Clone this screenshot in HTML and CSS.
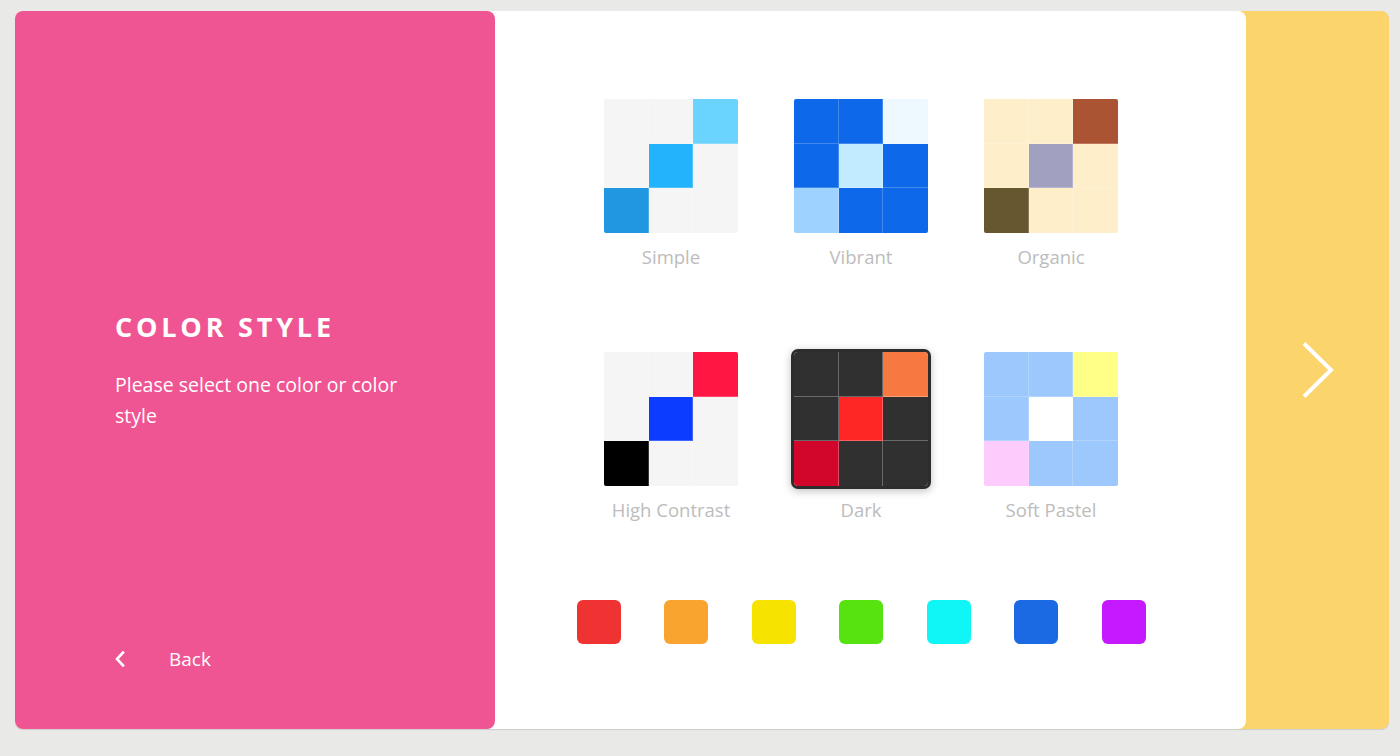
FILE: index.html
```html
<!DOCTYPE html>
<html>
<head>
<meta charset="utf-8">
<link rel="stylesheet" href="styles.css">
</head>
<body>
<div class="frame">
  <div class="sheet">
    <aside class="intro">
      <div class="intro-text">
        <h1 class="title">COLOR STYLE</h1>
        <p class="desc">Please select one color or color style</p>
      </div>
      <a class="back">
        <svg class="back-icon" width="12" height="16" viewBox="0 0 12 16"><polyline points="8,1.5 2,8 8,14.5" fill="none" stroke="#fff" stroke-width="2.6" stroke-linecap="square"/></svg>
        <span>Back</span>
      </a>
    </aside>
    <main class="picker">
      <div class="styles">
        <div class="style">
          <div class="tile simple">
            <i></i><i></i><i class="c1"></i><i></i><i class="c2"></i><i></i><i class="c3"></i><i></i><i></i>
          </div>
          <div class="label">Simple</div>
        </div>
        <div class="style">
          <div class="tile vibrant">
            <i></i><i></i><i class="c1"></i><i></i><i class="c2"></i><i></i><i class="c3"></i><i></i><i></i>
          </div>
          <div class="label">Vibrant</div>
        </div>
        <div class="style">
          <div class="tile organic">
            <i></i><i></i><i class="c1"></i><i></i><i class="c2"></i><i></i><i class="c3"></i><i></i><i></i>
          </div>
          <div class="label">Organic</div>
        </div>
        <div class="style">
          <div class="tile contrast">
            <i></i><i></i><i class="c1"></i><i></i><i class="c2"></i><i></i><i class="c3"></i><i></i><i></i>
          </div>
          <div class="label">High Contrast</div>
        </div>
        <div class="style">
          <div class="tile dark selected">
            <i></i><i></i><i class="c1"></i><i></i><i class="c2"></i><i></i><i class="c3"></i><i></i><i></i>
          </div>
          <div class="label">Dark</div>
        </div>
        <div class="style">
          <div class="tile pastel">
            <i></i><i></i><i class="c1"></i><i></i><i class="c2"></i><i></i><i class="c3"></i><i></i><i></i>
          </div>
          <div class="label">Soft Pastel</div>
        </div>
      </div>
      <div class="swatches">
        <span class="swatch red"></span>
        <span class="swatch orange"></span>
        <span class="swatch yellow"></span>
        <span class="swatch green"></span>
        <span class="swatch cyan"></span>
        <span class="swatch blue"></span>
        <span class="swatch purple"></span>
      </div>
    </main>
  </div>
  <div class="next">
    <svg width="40" height="60" viewBox="0 0 40 60"><polyline points="6,3.5 33,30 6,56.5" fill="none" stroke="#fff" stroke-width="4"/></svg>
  </div>
</div>
</body>
</html>
```

FILE: styles.css
```css
html, body {
  margin: 0;
  padding: 0;
}
body {
  background: #e9e9e7;
  font-family: "Open Sans", "Liberation Sans", sans-serif;
  width: 1400px;
  height: 756px;
  overflow: hidden;
}
.frame {
  margin: 11px 0 0 15px;
  width: 1374px;
  height: 718px;
  background: #fcd46c;
  border-radius: 8px;
  display: flex;
  box-shadow: 0 1px 1px rgba(0,0,0,0.12);
}
.sheet {
  width: 1231px;
  background: #fff;
  border-radius: 8px;
  display: flex;
}
.intro {
  width: 480px;
  box-sizing: border-box;
  background: #ef5592;
  border-radius: 8px;
  padding: 297px 80px 58px 100px;
  display: flex;
  flex-direction: column;
  color: #fff;
}
.title {
  margin: 0;
  font-size: 27px;
  line-height: 38px;
  font-weight: 700;
  letter-spacing: 3.8px;
}
.desc {
  margin: 23px 0 0;
  font-size: 19.5px;
  line-height: 31px;
  max-width: 290px;
}
.back {
  margin-top: auto;
  display: flex;
  align-items: center;
  font-size: 19px;
  line-height: 24px;
}
.back-icon {
  margin-right: 42px;
}
.picker {
  flex: 1;
  padding: 88px 19px 0 0;
  display: flex;
  flex-direction: column;
  align-items: center;
}
.styles {
  display: grid;
  grid-template-columns: repeat(3, 134px);
  column-gap: 56px;
  row-gap: 85px;
}
.style {
  display: flex;
  flex-direction: column;
  align-items: center;
}
.tile {
  width: 134px;
  height: 134px;
  display: grid;
  grid-template-columns: repeat(3, 1fr);
  grid-template-rows: repeat(3, 1fr);
  border-radius: 2px;
  overflow: hidden;
}
.tile i {
  display: block;
  border-right: 1px solid rgba(255,255,255,0.22);
  border-bottom: 1px solid rgba(255,255,255,0.22);
}
.tile i:nth-child(3n) { border-right: 0; }
.tile i:nth-child(n+7) { border-bottom: 0; }
.label {
  white-space: nowrap;
  margin-top: 14px;
  font-size: 18.5px;
  line-height: 20px;
  color: #bcbcbc;
}
.simple i { background: #f5f5f5; }
.simple .c1 { background: #6ad4fe; }
.simple .c2 { background: #22b3fc; }
.simple .c3 { background: #2197e2; }
.vibrant i { background: #0d68ea; }
.vibrant .c1 { background: #eef8ff; }
.vibrant .c2 { background: #c3ebff; }
.vibrant .c3 { background: #9fd3ff; }
.organic i { background: #feefca; }
.organic .c1 { background: #ab5434; }
.organic .c2 { background: #a1a0c1; }
.organic .c3 { background: #66572e; }
.contrast i { background: #f5f5f5; }
.contrast .c1 { background: #ff1744; }
.contrast .c2 { background: #0c3cff; }
.contrast .c3 { background: #000; }
.dark i { background: #303030; border-color: rgba(255,255,255,0.28); }
.dark .c1 { background: #f8793f; }
.dark .c2 { background: #ff2626; }
.dark .c3 { background: #d2062b; }
.pastel i { background: #9cc8fd; }
.pastel .c1 { background: #fffe86; }
.pastel .c2 { background: #ffffff; }
.pastel .c3 { background: #fdccfd; }
.selected {
  border-radius: 4px;
  box-shadow: 0 0 0 3px #2d2d2d, 0 2px 8px 3px rgba(0,0,0,0.25);
}
.swatches {
  margin-top: 80px;
  display: flex;
  gap: 43.5px;
}
.swatch {
  width: 44px;
  height: 44px;
  border-radius: 6px;
}
.red { background: #ef3333; }
.orange { background: #f8a42e; }
.yellow { background: #f6e400; }
.green { background: #56e30f; }
.cyan { background: #10f6f6; }
.blue { background: #1b6ae3; }
.purple { background: #c51aff; }
.next {
  flex: 1;
  display: flex;
  align-items: center;
  justify-content: center;
}
```
